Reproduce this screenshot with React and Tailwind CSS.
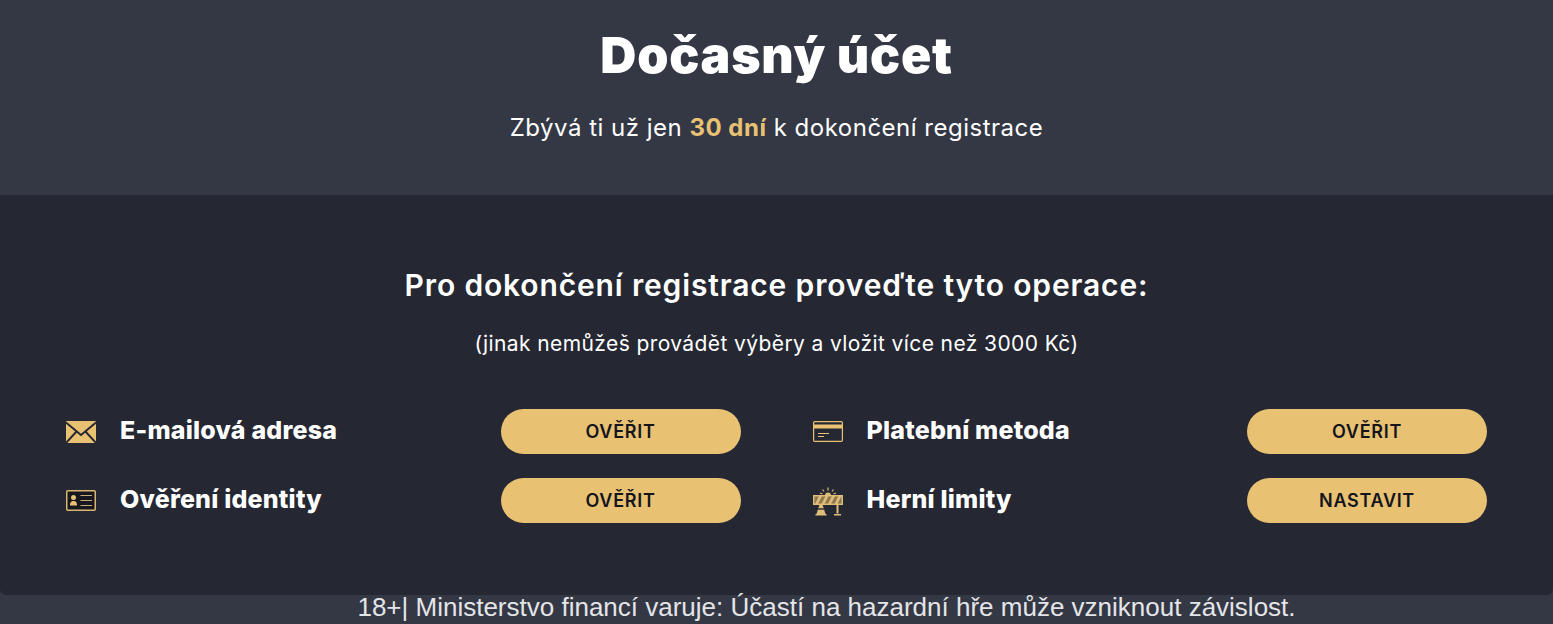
const gold = '#e8c173'
const panel = '#252733'

function MailIcon() {
  return (
    <svg width="30" height="22" viewBox="0 0 30 22" className="shrink-0">
      <rect width="30" height="22" rx="1" fill={gold} />
      <path d="M0 1.5 L15 14 L30 1.5 M0 22 L11 10 M30 22 L19 10" fill="none" stroke={panel} strokeWidth="1.9" />
    </svg>
  )
}

function IdIcon() {
  return (
    <svg width="30" height="21" viewBox="0 0 30 21" className="shrink-0">
      <rect x="0.75" y="0.75" width="28.5" height="19.5" rx="1" fill="#17181f" stroke="#d8b672" strokeWidth="1.5" />
      <circle cx="7.5" cy="7.5" r="2.5" fill={gold} />
      <path d="M4 15.5 C4 12 5.5 11 7.5 11 C9.5 11 11 12 11 15.5 Z" fill={gold} />
      <path d="M14.5 5.5 H26 M14.5 10.5 H26 M14.5 15.5 H26" stroke="#c9ad76" strokeWidth="1.2" />
    </svg>
  )
}

function CardIcon() {
  return (
    <svg width="30" height="21" viewBox="0 0 30 21" className="shrink-0">
      <rect x="0.6" y="0.6" width="28.8" height="19.8" rx="1.2" fill="none" stroke={gold} strokeWidth="1.2" />
      <rect x="0.6" y="3.5" width="28.8" height="4" fill={gold} />
      <path d="M5 12.5 H16 M5 15.5 H11" stroke={gold} strokeWidth="1.1" />
    </svg>
  )
}

function BarrierIcon() {
  return (
    <svg width="30" height="30" viewBox="0 0 30 30" className="shrink-0">
      <path d="M9.5 3.5 L11 5.5 M15 1.5 V4.5 M20.5 3.5 L19 5.5 M7 7 L9.5 8 M23 7 L20.5 8" stroke="#e0bd78" strokeWidth="1.2" fill="none" />
      <path d="M12 9.5 A3 3 0 0 1 18 9.5 Z" fill="#e0bd78" />
      <rect x="0.7" y="9.7" width="28.6" height="8.6" fill="#8f7a50" stroke="#e0bd78" strokeWidth="1.4" />
      <path d="M2 18 L6 10 H9 L5 18 Z M8.5 18 L12.5 10 H15.5 L11.5 18 Z M15 18 L19 10 H22 L18 18 Z M21.5 18 L25.5 10 H28.5 L24.5 18 Z" fill="#e0bd78" />
      <path d="M24.5 18.5 V27.5" stroke="#e0bd78" strokeWidth="2" fill="none" />
      <path d="M6.5 18.5 H9.5 L12.5 28 H3.5 Z" fill="#e0bd78" />
      <path d="M5 23 H11" stroke={panel} strokeWidth="1.4" />
      <path d="M2.5 28.8 H13.5 M21 28.8 H28" stroke="#e0bd78" strokeWidth="1.4" />
    </svg>
  )
}

function Row({ icon, label, action }) {
  return (
    <div className="flex items-center h-[45px]">
      <div className="w-[30px] flex justify-center">{icon}</div>
      <span className="ml-6 flex-1 text-[25px] leading-[43px] pb-[2px] font-extrabold text-white tracking-[0.2px]">{label}</span>
      <button className="w-[240px] h-[45px] rounded-full bg-[#e8c173] text-[#14151c] text-[18px] font-semibold tracking-[0.7px]">
        {action}
      </button>
    </div>
  )
}

export default function App() {
  return (
    <div className="h-screen overflow-hidden bg-[#343845] font-['Inter',sans-serif]">
      <header className="h-[195px] pt-[25px] text-center">
        <h1 className="text-[50px] leading-[60px] font-black text-white tracking-[0.75px]">Dočasný účet</h1>
        <p className="mt-[28px] text-[24px] leading-[30px] text-white tracking-[0.5px]">
          Zbývá ti už jen <strong className="font-bold text-[#e8c173]">30 dní</strong> k dokončení registrace
        </p>
      </header>
      <main className="h-[400px] rounded-b-md bg-[#252733] pt-[70px] px-[66px]">
        <h2 className="text-center text-[30px] leading-[40px] font-semibold text-white tracking-[0.85px]">
          Pro dokončení registrace proveďte tyto operace:
        </h2>
        <p className="mt-[23px] text-center text-[21px] leading-[32px] text-white tracking-[0.4px]">
          (jinak nemůžeš provádět výběry a vložit více než 3000 Kč)
        </p>
        <div className="mt-[49px] grid grid-cols-2 gap-x-[72px] gap-y-6">
          <Row icon={<MailIcon />} label="E-mailová adresa" action="OVĚŘIT" />
          <Row icon={<CardIcon />} label="Platební metoda" action="OVĚŘIT" />
          <Row icon={<IdIcon />} label="Ověření identity" action="OVĚŘIT" />
          <Row icon={<BarrierIcon />} label="Herní limity" action="NASTAVIT" />
        </div>
      </main>
      <p className="pl-[100px] text-center text-[26px] leading-[25px] text-[#e4e5e8] font-['Liberation_Sans',sans-serif]">
        18+| Ministerstvo financí varuje: Účastí na hazardní hře může vzniknout závislost.
      </p>
    </div>
  )
}
